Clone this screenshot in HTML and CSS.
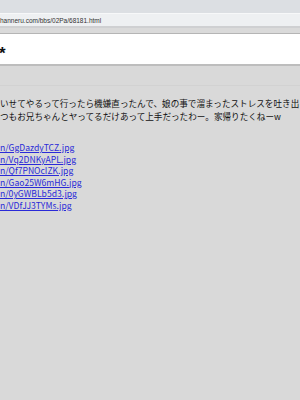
FILE: index.html
```html
<!DOCTYPE html>
<html lang="ja">
<head>
  <meta charset="UTF-8">
  <title>68181</title>
  <link rel="stylesheet" href="styles.css">
</head>
<body>
  <div class="toolbar"></div>
  <div class="address">
    <span class="url">hanneru.com/bbs/02Pa/68181.html</span>
  </div>
  <div class="tabstrip"></div>

  <!-- タイトル -->
  <div class="title-box">
    <span class="star">*</span>
  </div>

  <div class="content">
    <div class="sep"></div>
    <p class="body-text">
      いせてやるって行ったら機嫌直ったんで、娘の事で溜まったストレスを吐き出<br>
      つもお兄ちゃんとヤってるだけあって上手だったわー。家帰りたくねーw
    </p>
    <ul class="links">
      <li><a href="#">n/GgDazdyTCZ.jpg</a></li>
      <li><a href="#">n/Vq2DNKyAPL.jpg</a></li>
      <li><a href="#">n/Qf7PNOcIZK.jpg</a></li>
      <li><a href="#">n/Gao25W6mHG.jpg</a></li>
      <li><a href="#">n/0yGWBLb5d3.jpg</a></li>
      <li><a href="#">n/VDfJJ3TYMs.jpg</a></li>
    </ul>
  </div>
</body>
</html>
```

FILE: styles.css
```css
* {
  margin: 0;
  padding: 0;
  box-sizing: border-box;
}

html, body {
  height: 100%;
}

body {
  font-family: "Noto Sans CJK JP", "Noto Sans", sans-serif;
  background-color: #d9d9d9;
  color: #111;
  overflow: hidden;
  white-space: nowrap;
}

.toolbar {
  height: 14px;
  background-color: #dcdfe3;
  border-bottom: 1px solid #f7f8f9;
}

.address {
  height: 14px;
  background-color: #eef0f2;
  border-bottom: 2px solid #cfd0d2;
  font-size: 6.5px;
  line-height: 13px;
  color: #333;
}

.url {
  font-family: "Liberation Sans", sans-serif;
}

.tabstrip {
  height: 6px;
  background-color: #dadada;
  border-bottom: 1px solid #b5b5b5;
}

.title-box {
  height: 32px;
  background-color: #fff;
  border-bottom: 2px solid #bdbdbd;
  padding-top: 6px;
}

.star {
  display: inline-block;
  margin-left: -1px;
  font-family: "Liberation Sans", sans-serif;
  font-weight: 700;
  font-size: 17px;
  line-height: 18px;
}

.sep {
  height: 20px;
  border-bottom: 1px solid #d2d2d2;
}

.body-text {
  margin-top: 11px;
  font-size: 8.6px;
  line-height: 13px;
}

.links {
  list-style: none;
  margin-top: 19px;
  font-size: 8.6px;
  line-height: 11.6px;
}

.links a {
  color: #2a2ad8;
}
```
